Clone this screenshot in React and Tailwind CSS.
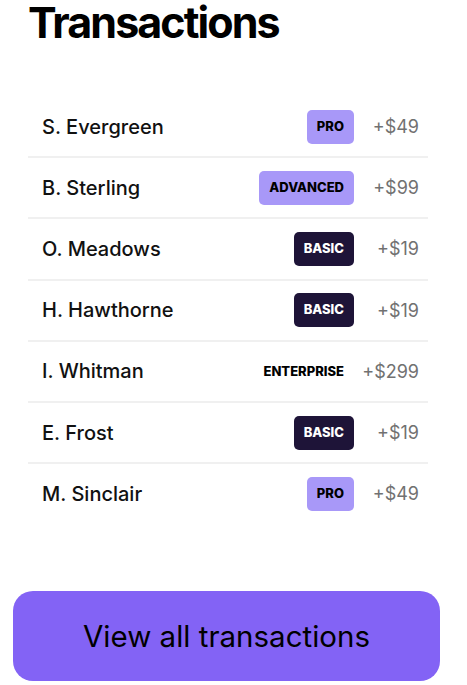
import React from "react";

const rows = [
  { name: "S. Evergreen", plan: "PRO", amount: "+$49" },
  { name: "B. Sterling", plan: "ADVANCED", amount: "+$99" },
  { name: "O. Meadows", plan: "BASIC", amount: "+$19" },
  { name: "H. Hawthorne", plan: "BASIC", amount: "+$19" },
  { name: "I. Whitman", plan: "ENTERPRISE", amount: "+$299" },
  { name: "E. Frost", plan: "BASIC", amount: "+$19" },
  { name: "M. Sinclair", plan: "PRO", amount: "+$49" },
];

const badgeStyles = {
  PRO: "bg-[#a898f8] text-black",
  ADVANCED: "bg-[#a898f8] text-black",
  BASIC: "bg-[#1e1438] text-white",
  ENTERPRISE: "bg-transparent text-black",
};

const Badge = ({ plan }) => (
  <span
    className={`h-[34px] px-[10px] rounded-[5px] flex items-center text-[13px] font-extrabold ${badgeStyles[plan]}`}>
    {plan}
  </span>
);

export default function App() {
  return (
    <div className="w-[467px] h-[685px] bg-white overflow-hidden font-['Inter',sans-serif]">
      <div className="pl-[28px] pr-[39px]">
        <h1 className="text-[43px] leading-none font-bold tracking-[-0.045em] text-black mt-px">
          Transactions
        </h1>
        <div className="mt-[53px] flex flex-col">
          {rows.map((r, i) => (
            <div
              key={i}
              className={`h-[59.2px] pl-[14px] pr-[9px] flex items-center justify-between ${
                i < rows.length - 1 ? "border-b-2 border-[#f0f0f0] box-content" : ""
              }`}>
              <span className="text-[20px] font-medium text-[#111]">{r.name}</span>
              <div className="flex items-center">
                <Badge plan={r.plan} />
                <span className="w-[65px] text-right text-[18px] text-[#717171]">
                  {r.amount}
                </span>
              </div>
            </div>
          ))}
        </div>
      </div>
      <div className="pl-[13px] pr-[27px] mt-[68px]">
        <button className="w-full h-[90px] rounded-[20px] bg-[#8363f5] text-black text-[29.5px] flex items-center justify-center">
          View all transactions
        </button>
      </div>
    </div>
  );
}
